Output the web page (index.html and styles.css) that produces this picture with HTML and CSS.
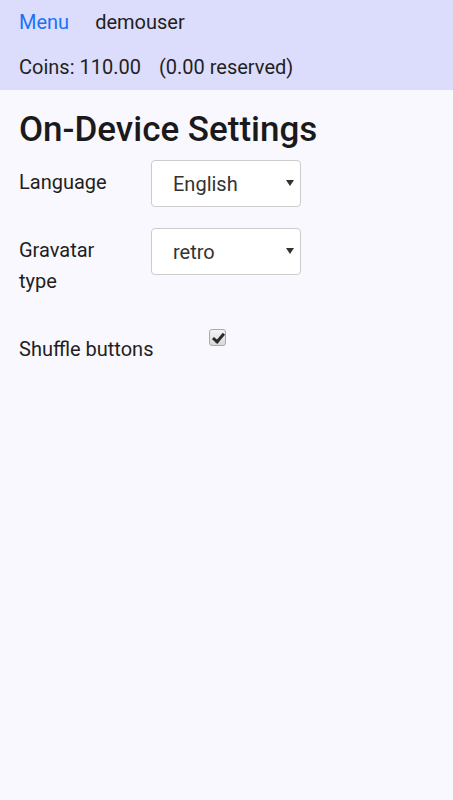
FILE: index.html
```html
<!DOCTYPE html>
<html lang="en">
  <head>
    <meta charset="UTF-8" />
    <meta name="viewport" content="width=device-width, initial-scale=1.0" />
    <title>On-Device Settings</title>
    <link rel="stylesheet" href="styles.css">
  </head>
  <body>
    <header class="topbar">
      <div class="topbar-row">
        <a class="menu-link" href="#">Menu</a>
        <span class="username">demouser</span>
      </div>
      <div class="topbar-row">
        <span>Coins: 110.00</span>
        <span>(0.00 reserved)</span>
      </div>
    </header>

    <main class="content">
      <h1>On-Device Settings</h1>

      <div class="setting">
        <label class="setting-label" for="language">Language</label>
        <div class="select-wrap">
          <select id="language">
            <option>English</option>
          </select>
        </div>
      </div>

      <div class="setting">
        <label class="setting-label" for="gravatar">Gravatar type</label>
        <div class="select-wrap">
          <select id="gravatar">
            <option>retro</option>
          </select>
        </div>
      </div>

      <div class="setting setting-check">
        <label class="setting-label wide" for="shuffle">Shuffle buttons</label>
        <input type="checkbox" id="shuffle" checked />
      </div>
    </main>
  </body>
</html>
```

FILE: styles.css
```css
body {
  margin: 0;
  font-family: Roboto, "Noto Sans", sans-serif;
  font-size: 20px;
  color: #1f1f22;
  background-color: #f8f8fe;
  min-height: 100vh;
}
.topbar {
  background-color: #dcdcfc;
  padding: 8px 19px 9px;
}
.topbar-row {
  display: flex;
  gap: 26px;
  height: 28px;
  align-items: center;
}
.topbar-row + .topbar-row {
  margin-top: 17px;
  gap: 18px;
}
.menu-link {
  color: #1a73f5;
  text-decoration: none;
}
.content {
  padding: 0 19px;
}
h1 {
  font-size: 35px;
  font-weight: 500;
  margin: 18px 0 8px;
  line-height: 44px;
  color: #1a1a1c;
}
.setting {
  display: flex;
  align-items: flex-start;
  margin-bottom: 21px;
}
.setting-label {
  width: 132px;
  padding-right: 20px;
  box-sizing: border-box;
  line-height: 31px;
  padding-top: 7px;
}
.setting-label.wide {
  width: 190px;
  padding-top: 5px;
}
.select-wrap {
  position: relative;
  width: 150px;
}
.select-wrap::after {
  content: "";
  position: absolute;
  right: 7px;
  top: 20px;
  border-left: 4px solid transparent;
  border-right: 4px solid transparent;
  border-top: 6px solid #333;
  pointer-events: none;
}
select {
  appearance: none;
  width: 150px;
  height: 47px;
  padding: 0 21px;
  font-family: inherit;
  font-size: 20px;
  color: #333;
  background-color: #fff;
  border: 1px solid #ccc;
  border-radius: 4px;
}
.setting-check {
  margin-top: 32px;
}
input[type="checkbox"] {
  appearance: none;
  width: 17px;
  height: 17px;
  margin: 0;
  border: 1px solid #aaa;
  border-radius: 3px;
  background: linear-gradient(#f4f4f4, #d8d8d8);
  position: relative;
}
input[type="checkbox"]:checked::after {
  content: "";
  position: absolute;
  left: 5px;
  top: 1px;
  width: 4px;
  height: 9px;
  border-right: 3px solid #2a2a2a;
  border-bottom: 3px solid #2a2a2a;
  transform: rotate(40deg);
}
```
